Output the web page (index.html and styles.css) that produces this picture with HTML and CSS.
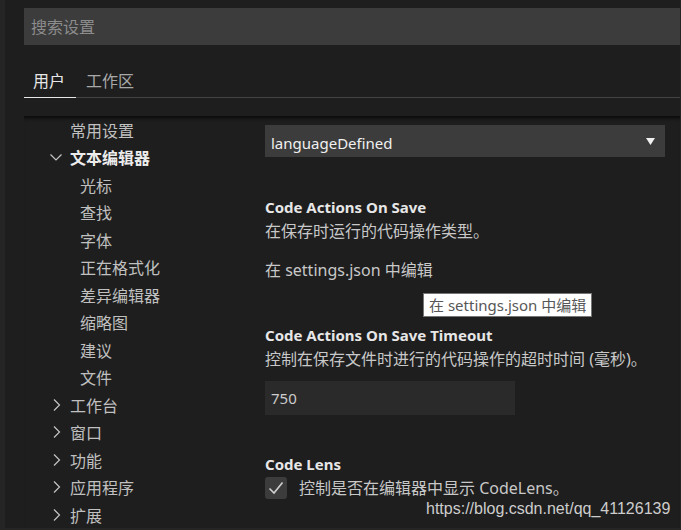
FILE: index.html
```html
<!DOCTYPE html>
<html lang="zh-CN">
<head>
    <meta charset="UTF-8">
    <meta name="viewport" content="width=device-width, initial-scale=1.0">
    <title>设置</title>
    <link rel="stylesheet" href="styles.css">
</head>
<body>
    <div class="editor">
        <div class="search">搜索设置</div>

        <div class="tabs">
            <div class="tab active">用户</div>
            <div class="tab">工作区</div>
        </div>

        <div class="body">
            <ul class="tree">
                <li class="node level1">常用设置</li>
                <li class="node level1 open">
                    <svg class="chevron" width="14" height="14" viewBox="0 0 14 14"><path d="M1.5 4.5 L7 10 L12.5 4.5" fill="none" stroke="#c5c5c5" stroke-width="1.2"/></svg>
                    文本编辑器
                </li>
                <li class="node level2">光标</li>
                <li class="node level2">查找</li>
                <li class="node level2">字体</li>
                <li class="node level2">正在格式化</li>
                <li class="node level2">差异编辑器</li>
                <li class="node level2">缩略图</li>
                <li class="node level2">建议</li>
                <li class="node level2">文件</li>
                <li class="node level1 closed">
                    <svg class="chevron" width="14" height="14" viewBox="0 0 14 14"><path d="M4 1.5 L9.5 7 L4 12.5" fill="none" stroke="#c5c5c5" stroke-width="1.2"/></svg>
                    工作台
                </li>
                <li class="node level1 closed">
                    <svg class="chevron" width="14" height="14" viewBox="0 0 14 14"><path d="M4 1.5 L9.5 7 L4 12.5" fill="none" stroke="#c5c5c5" stroke-width="1.2"/></svg>
                    窗口
                </li>
                <li class="node level1 closed">
                    <svg class="chevron" width="14" height="14" viewBox="0 0 14 14"><path d="M4 1.5 L9.5 7 L4 12.5" fill="none" stroke="#c5c5c5" stroke-width="1.2"/></svg>
                    功能
                </li>
                <li class="node level1 closed">
                    <svg class="chevron" width="14" height="14" viewBox="0 0 14 14"><path d="M4 1.5 L9.5 7 L4 12.5" fill="none" stroke="#c5c5c5" stroke-width="1.2"/></svg>
                    应用程序
                </li>
                <li class="node level1 closed">
                    <svg class="chevron" width="14" height="14" viewBox="0 0 14 14"><path d="M4 1.5 L9.5 7 L4 12.5" fill="none" stroke="#c5c5c5" stroke-width="1.2"/></svg>
                    扩展
                </li>
            </ul>

            <div class="settings">
                <div class="select">
                    <span>languageDefined</span>
                    <svg width="9" height="7" viewBox="0 0 9 7"><polygon points="0,0 9,0 4.5,7" fill="#f0f0f0"/></svg>
                </div>

                <div class="setting first">
                    <div class="title">Code Actions On Save</div>
                    <div class="desc">在保存时运行的代码操作类型。</div>
                    <div class="link">在 settings.json 中编辑</div>
                    <div class="tooltip">在 settings.json 中编辑</div>
                </div>

                <div class="setting">
                    <div class="title">Code Actions On Save Timeout</div>
                    <div class="desc">控制在保存文件时进行的代码操作的超时时间 (毫秒)。</div>
                    <div class="number">750</div>
                </div>

                <div class="setting last">
                    <div class="title">Code Lens</div>
                    <div class="check-row">
                        <div class="checkbox">
                            <svg width="22" height="22" viewBox="0 0 22 22"><path d="M4.5 11.5 L9 16 L17.5 5.5" fill="none" stroke="#d0d0d0" stroke-width="1.6"/></svg>
                        </div>
                        <span class="desc">控制是否在编辑器中显示 CodeLens。</span>
                    </div>
                </div>
            </div>
        </div>

        <div class="watermark">https://blog.csdn.net/qq_41126139</div>
    </div>
</body>
</html>
```

FILE: styles.css
```css
* {
    margin: 0;
    padding: 0;
    box-sizing: border-box;
}

body {
    background: #252526;
    font-family: "Noto Sans", "Noto Sans CJK SC", sans-serif;
    font-size: 15px;
    color: #cccccc;
    overflow: hidden;
}

.editor {
    position: relative;
    margin-left: 5px;
    width: 675px;
    height: 528px;
    background: #1e1e1e;
    padding-left: 19px;
    padding-top: 8px;
    overflow: hidden;
}

.search {
    height: 37px;
    background: #3c3c3c;
    color: #8c8c8c;
    font-size: 16px;
    line-height: 38px;
    padding-left: 7px;
}

.tabs {
    display: flex;
    margin-top: 22px;
    border-bottom: 1px solid #434343;
}

.tab {
    font-size: 16px;
    line-height: 24px;
    padding: 2px 10px 4px 10px;
    color: #a8a8a8;
}

.tab.active {
    color: #e7e7e7;
    padding-left: 9px;
    padding-right: 11px;
    border-bottom: 1px solid #e7e7e7;
    margin-bottom: -1px;
}

.body {
    display: flex;
    margin-top: 18px;
    height: 411px;
    box-shadow: inset 0 6px 5px -5px #000;
}

.tree {
    list-style: none;
    width: 241px;
    flex-shrink: 0;
}

.node {
    display: flex;
    align-items: center;
    height: 27.5px;
    font-size: 16px;
    color: #c0c0c0;
}

.level1 {
    padding-left: 46px;
}

.level1.open,
.level1.closed {
    padding-left: 25px;
}

.level1.open {
    color: #ececec;
    font-weight: bold;
}

.level2 {
    padding-left: 56px;
}

.chevron {
    margin-right: 7px;
    flex-shrink: 0;
}

.level1.closed .chevron {
    margin-left: 1px;
    margin-right: 6px;
}

.settings {
    width: 400px;
    padding-top: 9px;
}

.select {
    display: flex;
    align-items: center;
    justify-content: space-between;
    height: 32px;
    background: #3c3c3c;
    color: #f0f0f0;
    font-size: 15px;
    padding: 3px 10px 0 6px;
}

.select svg {
    margin-top: -3px;
}

.setting {
    position: relative;
    margin-top: 41px;
}

.setting.first {
    margin-top: 38px;
}

.setting.last {
    margin-top: 37px;
}

.title {
    font-weight: bold;
    color: #e7e7e7;
    line-height: 24px;
}

.desc {
    font-size: 16px;
    line-height: 24px;
    color: #c8c8c8;
}

.link {
    margin-top: 15px;
    font-size: 16px;
    line-height: 24px;
    color: #c8c8c8;
}

.tooltip {
    position: absolute;
    left: 158px;
    top: 98px;
    background: #ffffff;
    border: 1px solid #767676;
    color: #575757;
    line-height: 22px;
    padding: 0 5px;
    white-space: nowrap;
}

.number {
    margin-top: 10px;
    width: 250px;
    height: 34px;
    line-height: 35px;
    background: #2a2a2a;
    padding-left: 6px;
    color: #cccccc;
}

.check-row {
    display: flex;
    align-items: center;
    gap: 12px;
    height: 24px;
}

.checkbox {
    width: 22px;
    height: 22px;
    background: #3c3c3c;
    border-radius: 3px;
}

.watermark {
    position: absolute;
    left: 421px;
    top: 500px;
    font-family: "Liberation Sans", Arial, sans-serif;
    font-size: 16px;
    color: #cdcdcd;
}
```
